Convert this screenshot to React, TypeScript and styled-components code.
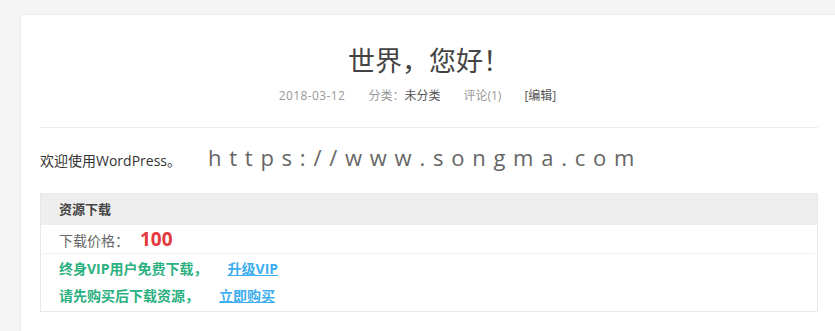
import styled, { createGlobalStyle } from "styled-components";

const GlobalStyle = createGlobalStyle`
    *, *::before, *::after {
        box-sizing: border-box;
    }
    html, body {
        margin: 0;
        padding: 0;
        background: #f5f5f5;
        font-family: "Open Sans", "Noto Sans CJK SC", sans-serif;
        overflow: hidden;
    }
`;

const Page = styled.div`
    padding: 14px 0 0 20px;
    height: 331px;
`;

const Card = styled.article`
    width: 818px;
    min-height: 330px;
    background: #fff;
    border: 1px solid #e9e9e9;
    border-radius: 3px;
    padding: 0 19px;
`;

const Header = styled.header`
    text-align: center;
    padding: 26px 0 22px;
    border-bottom: 1px solid #ececec;
`;

const Title = styled.h1`
    margin: 0;
    font-size: 27px;
    line-height: 40px;
    font-weight: 400;
    color: #444;
`;

const Meta = styled.div`
    margin-top: 6px;
    font-size: 12px;
    line-height: 18px;
    color: #999;
`;

const MetaItem = styled.span<{ $dark?: boolean }>`
    margin-right: 23px;
    color: ${(p) => (p.$dark ? "#555" : "#999")};
`;

const MetaDate = styled(MetaItem)`
    letter-spacing: 0.4px;
`;

const Strong = styled.span`
    color: #555;
`;

const Content = styled.div`
    padding-top: 14px;
`;

const Intro = styled.p`
    margin: 0;
    font-size: 14px;
    line-height: 30px;
    color: #333;
`;

const Url = styled.span`
    margin-left: 27px;
    font-family: "Open Sans", sans-serif;
    font-size: 22px;
    letter-spacing: 7.75px;
    color: #666;
`;

const DownloadBox = styled.section`
    width: 778px;
    margin-top: 17px;
    border: 1px solid #e8e8e8;
`;

const BoxHead = styled.div`
    background: #eee;
    height: 31px;
    line-height: 31px;
    padding-left: 18px;
    font-size: 13px;
    font-weight: 700;
    color: #444;
`;

const PriceRow = styled.div`
    margin: 0 2px;
    padding: 0 16px;
    height: 29px;
    line-height: 29px;
    border-bottom: 1px solid #f0f0f0;
    font-size: 14px;
    color: #666;
`;

const Price = styled.span`
    margin-left: 11px;
    font-size: 19px;
    font-weight: 700;
    color: #e4393c;
`;

const Notes = styled.div`
    padding: 1px 18px 2px;
`;

const Note = styled.p`
    margin: 0;
    height: 27px;
    line-height: 27px;
    font-size: 14px;
    font-weight: 700;
    color: #2bb07f;
`;

const BuyLink = styled.a`
    margin-left: 20px;
    color: #3daef0;
    text-decoration: underline;
    cursor: pointer;
`;

function App() {
    return (
        <>
            <GlobalStyle />
            <Page>
                <Card>
                    <Header>
                        <Title>世界，您好！</Title>
                        <Meta>
                            <MetaDate>2018-03-12</MetaDate>
                            <MetaItem>
                                分类：<Strong>未分类</Strong>
                            </MetaItem>
                            <MetaItem>评论(1)</MetaItem>
                            <MetaItem $dark>[编辑]</MetaItem>
                        </Meta>
                    </Header>
                    <Content>
                        <Intro>
                            欢迎使用WordPress。
                            <Url>https://www.songma.com</Url>
                        </Intro>
                        <DownloadBox>
                            <BoxHead>资源下载</BoxHead>
                            <PriceRow>
                                下载价格：<Price>100</Price>
                            </PriceRow>
                            <Notes>
                                <Note>
                                    终身VIP用户免费下载，
                                    <BuyLink>升级VIP</BuyLink>
                                </Note>
                                <Note>
                                    请先购买后下载资源，
                                    <BuyLink>立即购买</BuyLink>
                                </Note>
                            </Notes>
                        </DownloadBox>
                    </Content>
                </Card>
            </Page>
        </>
    );
}

export default App;
